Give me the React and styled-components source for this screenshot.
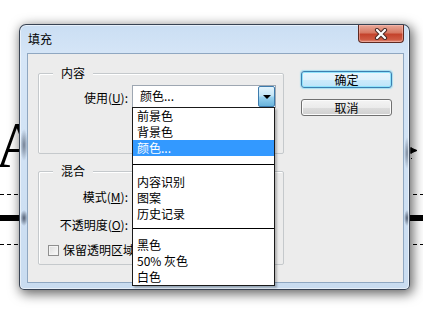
import React from 'react';
import styled, { createGlobalStyle } from 'styled-components';

const Global = createGlobalStyle`
  html, body { margin: 0; padding: 0; background: #fff; }
  body {
    width: 423px; height: 309px; overflow: hidden;
    font-family: "Noto Sans CJK SC", "Noto Sans", sans-serif;
    font-size: 12px; color: #000;
  }
`;

const Desktop = styled.div`
  position: relative;
  width: 423px;
  height: 309px;
  overflow: hidden;
  background: #fff;
`;

/* ---- canvas content behind the dialog ---- */
const BigLetter = styled.div`
  position: absolute;
  left: -5px;
  top: 112px;
  font-family: "Liberation Serif", serif;
  font-size: 66px;
  line-height: 66px;
  color: #000;
`;

const GuideLine = styled.div`
  position: absolute;
  left: 0;
  width: 423px;
  top: ${p => p.$y}px;
  height: 1px;
  background: repeating-linear-gradient(to right, #000 0 4px, transparent 4px 7px);
`;

const HeavyLine = styled.div`
  position: absolute;
  left: 0;
  width: 423px;
  top: 215px;
  height: 6px;
  background: #000;
`;

const Marker = styled.svg`
  position: absolute;
  left: 410px;
  top: 146px;
`;

/* ---- dialog window ---- */
const Window = styled.div`
  position: absolute;
  left: 19px;
  top: 24px;
  width: 391px;
  height: 266px;
  box-sizing: border-box;
  display: flex;
  flex-direction: column;
  padding: 0 5px 6px 7px;
  border: 1px solid rgba(30, 40, 55, 0.85);
  border-radius: 7px 7px 5px 5px;
  background:
    radial-gradient(ellipse 4px 16px at 4px 120px, rgba(40, 50, 70, 0.55), transparent),
    radial-gradient(ellipse 4px 8px at 4px 193px, rgba(30, 40, 60, 0.7), transparent),
    radial-gradient(ellipse 3px 16px at 387px 128px, rgba(40, 50, 70, 0.5), transparent),
    radial-gradient(ellipse 3px 8px at 387px 193px, rgba(30, 40, 60, 0.7), transparent),
    linear-gradient(to bottom, #cadef3 0%, #d6e6f7 12%, #c9dcf0 100%);
  box-shadow: 2px 3px 12px 1px rgba(0, 0, 0, 0.6), inset 0 0 0 1px rgba(255, 255, 255, 0.55);
`;

const TitleBar = styled.div`
  height: 28px;
  display: flex;
  align-items: center;
`;

const Title = styled.span`
  font-size: 12px;
  line-height: 14px;
  padding-left: 1px;
  margin-top: -1px;
  color: #000;
`;

const CloseButton = styled.div`
  margin-left: auto;
  align-self: flex-start;
  width: 46px;
  height: 18px;
  box-sizing: border-box;
  border: 1px solid #5e2a22;
  border-top: none;
  border-radius: 0 0 4px 4px;
  background: linear-gradient(to bottom, #e9a899 0%, #d77963 45%, #c4432c 55%, #cf5a42 85%, #e09280 100%);
  box-shadow: inset 0 0 0 1px rgba(255, 200, 190, 0.45);
  display: flex;
  align-items: center;
  justify-content: center;
`;

const Client = styled.div`
  flex: 1;
  box-sizing: border-box;
  border: 1px solid #8fa7c1;
  background: #ececec;
  display: flex;
  padding: 17px 0 0 10px;
`;

const LeftColumn = styled.div`
  width: 246px;
  display: flex;
  flex-direction: column;
`;

const RightColumn = styled.div`
  margin-left: 17px;
  display: flex;
  flex-direction: column;
  gap: 11px;
`;

const Group = styled.div`
  position: relative;
  box-sizing: border-box;
  height: ${p => p.$h}px;
  margin-top: ${p => p.$mt}px;
  border: 1px solid #c5c9cc;
  border-radius: 2px;
  box-shadow: inset 1px 1px 0 #fff;
  padding: ${p => p.$pad};
  display: flex;
  flex-direction: column;
`;

const GroupTitle = styled.span`
  position: absolute;
  top: -8px;
  left: 14px;
  padding: 0 8px;
  background: #ececec;
  font-size: 12px;
  line-height: 14px;
`;

const FieldRow = styled.div`
  display: flex;
  align-items: center;
  height: ${p => p.$h || 23}px;
  margin-top: ${p => p.$mt || 0}px;
`;

const FieldLabel = styled.span`
  width: 89px;
  margin-right: 4px;
  text-align: right;
  font-size: 12px;
  line-height: 14px;
  margin-top: ${p => p.$dy || 0}px;
  white-space: nowrap;
`;

const Key = styled.span`
  text-decoration: underline;
  text-underline-offset: 1px;
`;

const Combo = styled.div`
  position: relative;
  box-sizing: border-box;
  width: ${p => p.$w || 144}px;
  height: ${p => p.$h || 23}px;
  border: 1px solid #9ea7b2;
  background: #fff;
  display: flex;
  align-items: center;
`;

const ComboText = styled.span`
  flex: 1;
  padding-left: 7px;
  font-size: 12px;
  line-height: 14px;
  margin-top: -2px;
`;

const ComboButton = styled.div`
  width: 17px;
  height: 21px;
  box-sizing: border-box;
  border: 1px solid #3d7bad;
  border-radius: 2px;
  background: linear-gradient(to bottom, #e4f4fc 0%, #c4e5f6 45%, #98d1ef 55%, #68b3db 100%);
  display: flex;
  align-items: center;
  justify-content: center;
`;

const Arrow = styled.span`
  width: 0;
  height: 0;
  border-left: 4px solid transparent;
  border-right: 4px solid transparent;
  border-top: 4px solid #000;
  margin-top: 1px;
`;

const DropList = styled.ul`
  position: absolute;
  left: -1px;
  top: 21px;
  width: 143px;
  box-sizing: border-box;
  margin: 0;
  padding: 0;
  list-style: none;
  background: #fff;
  border: 1px solid #1a1a1a;
  box-shadow: 2px 2px 2px rgba(0, 0, 0, 0.25);
  z-index: 10;
`;

const DropItem = styled.li`
  height: 16px;
  line-height: 16px;
  padding-left: 4px;
  font-size: 12px;
  white-space: nowrap;
  background: ${p => (p.$active ? '#3399ff' : 'transparent')};
  color: ${p => (p.$active ? '#fff' : '#000')};
`;

const DropSeparator = styled.li`
  height: ${p => p.$h}px;
  display: flex;
  flex-direction: column;
  &::after {
    content: '';
    margin-top: ${p => p.$at}px;
    height: 1px;
    background: #000;
  }
`;

const TextBox = styled.div`
  box-sizing: border-box;
  width: 60px;
  height: 21px;
  border: 1px solid #abadb3;
  background: #fff;
`;

const CheckRow = styled.label`
  display: flex;
  align-items: center;
  margin-top: 7px;
  margin-left: 9px;
  height: 14px;
  white-space: nowrap;
`;

const CheckBox = styled.span`
  width: 11px;
  height: 11px;
  box-sizing: border-box;
  border: 1px solid #8f8f8f;
  background: linear-gradient(135deg, #dcdcdc, #fbfbfb);
  box-shadow: inset 0 0 0 1px #f4f4f4;
  margin-right: 4px;
`;

const CheckText = styled.span`
  font-size: 12px;
  line-height: 14px;
`;

const DialogButton = styled.div`
  width: 91px;
  height: 17px;
  box-sizing: border-box;
  border-radius: 3px;
  border: 1px solid ${p => (p.$primary ? '#3c7fb1' : '#707070')};
  background: ${p =>
    p.$primary
      ? 'linear-gradient(to bottom, #eaf6fd 0%, #dff2fc 50%, #cdebfb 51%, #bde4f9 100%)'
      : 'linear-gradient(to bottom, #f4f4f4 0%, #ebebeb 50%, #dddddd 51%, #cfcfcf 100%)'};
  box-shadow: ${p =>
    p.$primary
      ? 'inset 0 0 0 1px #8fe3fb, 0 0 1px 1px rgba(120, 215, 245, 0.6)'
      : 'inset 0 0 0 1px #fbfbfb'};
  display: flex;
  align-items: center;
  justify-content: center;
  font-size: 12px;
  line-height: 14px;
`;

export default function App() {
  return (
    <Desktop>
      <Global />
      <BigLetter>A</BigLetter>
      <GuideLine $y={194} />
      <HeavyLine />
      <GuideLine $y={244} />
      <Marker width="8" height="16" viewBox="0 0 8 16">
        <path d="M1 1 L1 8 M1 2 L7 4.5 L1 7 Z" stroke="#000" strokeWidth="1" fill="#000" />
        <rect x="1" y="12" width="1" height="1" fill="#000" />
      </Marker>

      <Window>
        <TitleBar>
          <Title>填充</Title>
          <CloseButton>
            <svg width="14" height="12" viewBox="0 0 14 12">
              <path d="M3 2 L11 10 M11 2 L3 10" stroke="#4a2a26" strokeWidth="4.2" strokeLinecap="round" />
              <path d="M3 2 L11 10 M11 2 L3 10" stroke="#fff" strokeWidth="2.2" strokeLinecap="round" />
            </svg>
          </CloseButton>
        </TitleBar>

        <Client>
          <LeftColumn>
            <Group $h={81} $mt={2} $pad="11px 0 0 0">
              <GroupTitle>内容</GroupTitle>
              <FieldRow>
                <FieldLabel $dy={2}>使用(<Key>U</Key>):</FieldLabel>
                <Combo>
                  <ComboText>颜色...</ComboText>
                  <ComboButton><Arrow /></ComboButton>
                  <DropList>
                    <DropItem>前景色</DropItem>
                    <DropItem>背景色</DropItem>
                    <DropItem $active>颜色...</DropItem>
                    <DropSeparator $h={18} $at={8} />
                    <DropItem>内容识别</DropItem>
                    <DropItem>图案</DropItem>
                    <DropItem>历史记录</DropItem>
                    <DropSeparator $h={15} $at={6} />
                    <DropItem>黑色</DropItem>
                    <DropItem>50% 灰色</DropItem>
                    <DropItem>白色</DropItem>
                  </DropList>
                </Combo>
              </FieldRow>
            </Group>

            <Group $h={94} $mt={17} $pad="14px 0 0 0">
              <GroupTitle>混合</GroupTitle>
              <FieldRow $h={22}>
                <FieldLabel>模式(<Key>M</Key>):</FieldLabel>
                <Combo $w={140} $h={21} />
              </FieldRow>
              <FieldRow $h={22} $mt={6}>
                <FieldLabel>不透明度(<Key>O</Key>):</FieldLabel>
                <TextBox />
              </FieldRow>
              <CheckRow>
                <CheckBox />
                <CheckText>保留透明区域</CheckText>
              </CheckRow>
            </Group>
          </LeftColumn>

          <RightColumn>
            <DialogButton $primary>确定</DialogButton>
            <DialogButton>取消</DialogButton>
          </RightColumn>
        </Client>
      </Window>
    </Desktop>
  );
}
